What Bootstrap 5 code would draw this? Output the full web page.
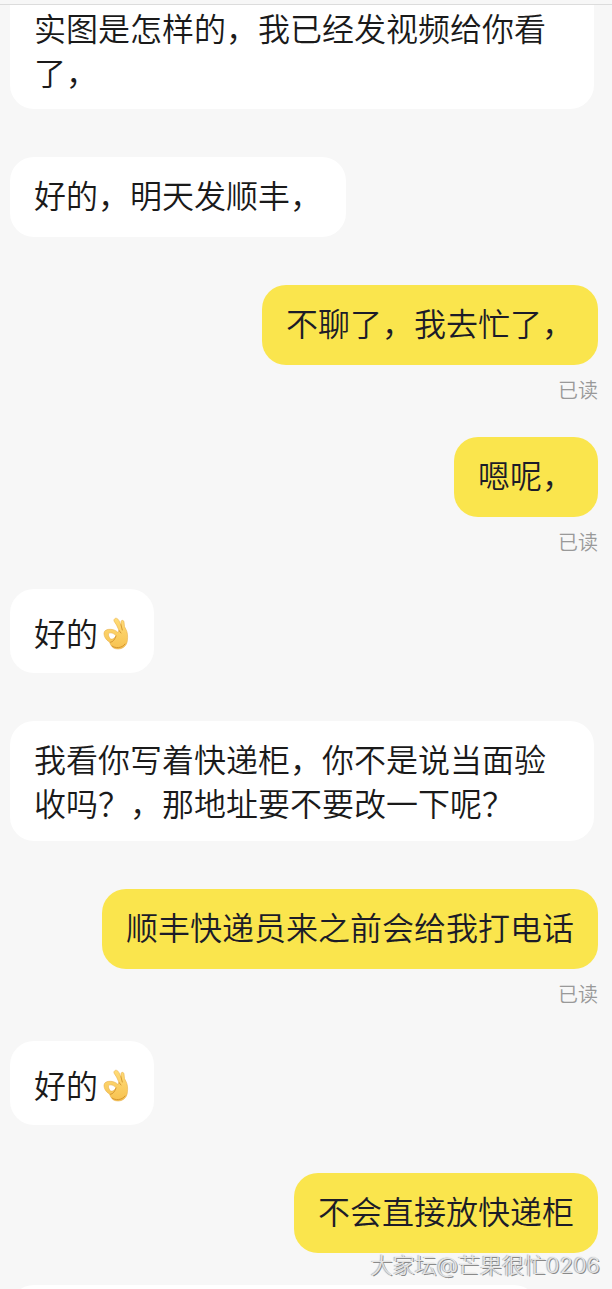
<!DOCTYPE html>
<html lang="zh-CN">
<head>
<meta charset="utf-8">
<meta name="viewport" content="width=device-width, initial-scale=1">
<title>聊天</title>
<link href="https://cdn.jsdelivr.net/npm/bootstrap@5.3.0/dist/css/bootstrap.min.css" rel="stylesheet">
<style>
  body { background: #f7f7f7; color: #1a1a1a; font-family: "Noto Sans CJK SC", sans-serif; font-weight: 350; }
  .chat-window { height: 100vh; }
  .top-edge { height: 5px; border-bottom: 1px solid #dcdcdc; }
  .chat-log { padding: 0 14px 0 10px; }
  .bubble { min-height: 80px; max-width: 584px; padding: 15px 24px 17px; border-radius: 24px; background: #fff; font-size: 32px; line-height: 44px; }
  .bubble-mine { background: #fae54d; color: #1c1c28; }
  .bubble-cut { min-height: 104px; border-top-left-radius: 0; border-top-right-radius: 0; padding-top: 0; padding-bottom: 16px; }
  .bubble-emoji { min-height: 84px; padding-top: 21px; }
  .bubble-next { width: 528px; }
  .gap-after { margin-bottom: 48px; }
  .gap-short { margin-bottom: 32px; }
  .read-mark { height: 72px; padding-top: 11px; font-size: 20px; line-height: 28px; color: #999; }
  .ok-hand { width: 28px; height: 34px; margin: 7px 0 0 4px; }
  .site-mark { right: 12px; bottom: 8px; font-family: Inter, "Noto Sans CJK SC", sans-serif; font-size: 22px; line-height: 32px; font-weight: 300; color: #e4e4e4; text-shadow: 1px 1px 0 #8a8a8a, -1px 0 1px #aaa; }
  .symbol-store { width: 0; height: 0; }
</style>
</head>
<body>
<svg class="symbol-store position-absolute" aria-hidden="true">
  <defs>
    <linearGradient id="skin" x1="0" y1="0" x2="0" y2="1">
      <stop offset="0" stop-color="#ffdc78"/><stop offset="1" stop-color="#f7c250"/>
    </linearGradient>
    <symbol id="ok" viewBox="0 0 28 34">
      <path d="M12.300 2.200C13.500 .5 15.500 1 17 3.700L19 8L19 4.500C19.500 2.800 21.500 3 22 4.800L22.500 9.500L24 12.500C25.500 15 26 19 25.300 24C24.700 28.500 21 32 16 32C12.500 32 10 30.500 8.500 27.500L7.500 25C4 23 1.800 19.500 2 16C2.200 13.400 5 12 8.500 12.300C11.500 12.400 14.200 13.600 16 15.500L17 13.500L14.500 8C13.200 5.700 11 3.700 12.300 2.200ZM7.200 16C5.800 16.600 6.500 19.500 8.200 21.700C9.800 22.800 12.500 21.500 14 18.900C12.500 16.700 9.500 15.300 7.200 16Z" fill="url(#skin)" fill-rule="evenodd" stroke="#e3a63c" stroke-width=".5"/>
      <path d="M17 13.500L19 16M19 8L20.300 13M14 19C12.800 22.500 11 25 8.500 25.300M10 29C13 31.500 20 31.500 23 27" fill="none" stroke="#d0912c" stroke-width=".9" stroke-linecap="round"/>
    </symbol>
  </defs>
</svg>
<main class="chat-window position-relative overflow-hidden">
  <div class="top-edge"></div>
  <div class="chat-log d-flex flex-column align-items-start">
    <div class="bubble bubble-cut gap-after"><p class="mb-0">实图是怎样的，我已经发视频给你看了，</p></div>
    <div class="bubble gap-after"><p class="mb-0">好的，明天发顺丰，</p></div>
    <div class="bubble bubble-mine align-self-end"><p class="mb-0">不聊了，我去忙了，</p></div>
    <div class="read-mark align-self-end">已读</div>
    <div class="bubble bubble-mine align-self-end"><p class="mb-0">嗯呢，</p></div>
    <div class="read-mark align-self-end">已读</div>
    <div class="bubble bubble-emoji gap-after d-flex align-items-start"><p class="mb-0">好的</p><svg class="ok-hand" role="img" aria-label="OK"><use href="#ok"/></svg></div>
    <div class="bubble gap-after"><p class="mb-0">我看你写着快递柜，你不是说当面验收吗？，那地址要不要改一下呢？</p></div>
    <div class="bubble bubble-mine align-self-end"><p class="mb-0">顺丰快递员来之前会给我打电话</p></div>
    <div class="read-mark align-self-end">已读</div>
    <div class="bubble bubble-emoji gap-after d-flex align-items-start"><p class="mb-0">好的</p><svg class="ok-hand" role="img" aria-label="OK"><use href="#ok"/></svg></div>
    <div class="bubble bubble-mine align-self-end gap-short"><p class="mb-0">不会直接放快递柜</p></div>
    <div class="bubble bubble-next"></div>
  </div>
  <div class="site-mark position-absolute">大家坛@芒果很忙0206</div>
</main>
<script src="https://cdn.jsdelivr.net/npm/bootstrap@5.3.0/dist/js/bootstrap.bundle.min.js"></script>
</body>
</html>
